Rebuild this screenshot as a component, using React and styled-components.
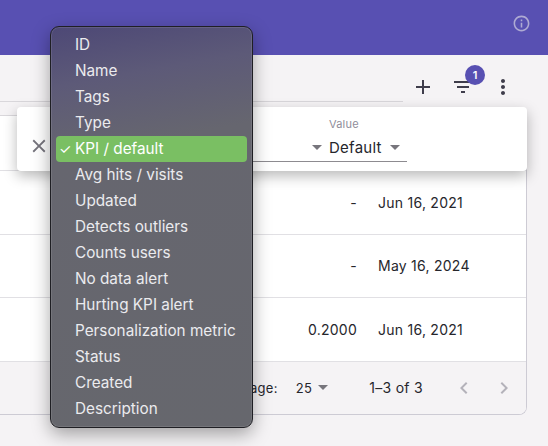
import styled, { createGlobalStyle } from 'styled-components';
import { MdAdd, MdChevronLeft, MdChevronRight, MdClose, MdFilterList, MdInfoOutline, MdMoreVert } from 'react-icons/md';

const columns = [
  'ID',
  'Name',
  'Tags',
  'Type',
  'KPI / default',
  'Avg hits / visits',
  'Updated',
  'Detects outliers',
  'Counts users',
  'No data alert',
  'Hurting KPI alert',
  'Personalization metric',
  'Status',
  'Created',
  'Description',
];

const rows = [
  { value: '-', date: 'Jun 16, 2021' },
  { value: '-', date: 'May 16, 2024' },
  { value: '0.2000', date: 'Jun 16, 2021' },
];

export default function App() {
  return (
    <Page>
      <GlobalStyle />
      <Header>
        <InfoIcon />
      </Header>

      <Main>
        <Toolbar>
          <SearchField />
          <ToolbarActions>
            <IconButton><MdAdd size={24} /></IconButton>
            <IconButton>
              <MdFilterList size={24} />
              <Badge>1</Badge>
            </IconButton>
            <IconButton><MdMoreVert size={24} /></IconButton>
          </ToolbarActions>
        </Toolbar>

        <TableCard>
          <TableHead />
          {rows.map((row, i) => (
            <TableRow key={`row${i}`}>
              <ValueCell>{row.value}</ValueCell>
              <DateCell>{row.date}</DateCell>
            </TableRow>
          ))}
          <TableFooter>
            <FooterLabel>Rows per page:</FooterLabel>
            <PageSize>25<Caret /></PageSize>
            <PageCount>1–3 of 3</PageCount>
            <PageButtons>
              <MdChevronLeft size={24} />
              <MdChevronRight size={24} />
            </PageButtons>
          </TableFooter>
        </TableCard>

        <FilterPanel>
          <CloseButton><MdClose size={22} /></CloseButton>
          <FilterFields>
            <OperatorField>
              <FieldLabel>Operator</FieldLabel>
              <FieldValue><Caret /></FieldValue>
            </OperatorField>
            <ValueField>
              <FieldLabel>Value</FieldLabel>
              <FieldValue>Default<Caret /></FieldValue>
            </ValueField>
          </FilterFields>
        </FilterPanel>
      </Main>

      <ColumnMenu>
        {columns.map((c) => (
          <MenuItem key={c} $selected={c === 'KPI / default'}>
            {c === 'KPI / default' && <Check>✓</Check>}
            {c}
          </MenuItem>
        ))}
      </ColumnMenu>
    </Page>
  );
}

const GlobalStyle = createGlobalStyle`
  html, body {
    margin: 0;
    padding: 0;
    background: #f5f3f5;
  }
`;

const Page = styled.div`
  position: relative;
  width: 548px;
  height: 446px;
  overflow: hidden;
  background: #f5f3f5;
  font-family: "Inter", "Liberation Sans", sans-serif;
  color: #26262c;
`;

const Header = styled.header`
  display: flex;
  justify-content: flex-end;
  align-items: center;
  height: 55px;
  padding: 0 17px 8px 0;
  box-sizing: border-box;
  background: #5850b2;
`;

const InfoIcon = styled(MdInfoOutline)`
  width: 19px;
  height: 19px;
  color: #aeaad3;
`;

const Main = styled.main`
  position: relative;
  padding-right: 21px;
`;

const Toolbar = styled.div`
  display: flex;
  height: 60px;
  box-sizing: border-box;
`;

const SearchField = styled.div`
  width: 403px;
  height: 46px;
  border-bottom: 1px solid #d9d7db;
`;

const ToolbarActions = styled.div`
  display: flex;
  align-items: center;
  gap: 16px;
  margin-left: 8px;
  height: 64px;
`;

const IconButton = styled.div`
  position: relative;
  display: flex;
  width: 24px;
  height: 24px;
  color: #3f3d4b;
`;

const Badge = styled.span`
  position: absolute;
  top: -10px;
  left: 14px;
  width: 20px;
  height: 20px;
  border-radius: 50%;
  background: #5850b2;
  color: #fff;
  font-size: 11px;
  font-weight: 600;
  line-height: 20px;
  text-align: center;
`;

const TableCard = styled.section`
  border-right: 1px solid #cdcbd4;
  border-bottom: 1px solid #cdcbd4;
  border-bottom-right-radius: 8px;
  overflow: hidden;
  background: #fff;
`;

const TableHead = styled.div`
  height: 55px;
  border-top: 1px solid #d9d7db;
  box-sizing: border-box;
`;

const TableRow = styled.div`
  display: grid;
  grid-template-columns: 1fr 148px;
  align-items: center;
  height: 63.6px;
  border-top: 1px solid #e1e0e4;
  box-sizing: border-box;
  font-size: 14px;
  letter-spacing: 0.25px;
`;

const ValueCell = styled.div`
  padding-right: 21px;
  text-align: right;
`;

const DateCell = styled.div``;

const TableFooter = styled.div`
  display: flex;
  justify-content: flex-end;
  align-items: center;
  height: 53px;
  padding-right: 10px;
  border-top: 1px solid #e1e0e4;
  box-sizing: border-box;
  background: #f5f3f5;
  font-size: 14px;
  letter-spacing: 0.3px;
`;

const FooterLabel = styled.span`
  margin-right: 18px;
  font-size: 13px;
`;

const PageSize = styled.span`
  display: flex;
  align-items: center;
  gap: 6px;
  font-size: 13px;
  margin-right: 41px;
`;

const PageCount = styled.span`
  margin-right: 29px;
`;

const PageButtons = styled.span`
  display: flex;
  gap: 16px;
  color: #b4b2ba;
`;

const FilterPanel = styled.div`
  position: absolute;
  top: 52px;
  left: 17px;
  display: flex;
  align-items: center;
  width: 510px;
  height: 64px;
  padding-left: 11px;
  box-sizing: border-box;
  border-radius: 4px;
  background: #fff;
  box-shadow: 0 5px 14px rgba(0, 0, 0, 0.28);
`;

const CloseButton = styled.div`
  display: flex;
  margin-top: 14px;
  color: #75737c;
`;

const FilterFields = styled.div`
  display: flex;
  gap: 7px;
  align-self: flex-end;
  margin: 0 120px 9px auto;
  border-bottom: 1px solid #8d8b90;
`;

const OperatorField = styled.div`
  display: flex;
  flex-direction: column;
  width: 118px;

  & > div {
    justify-content: flex-end;
  }
`;

const ValueField = styled.div`
  display: flex;
  flex-direction: column;
  width: 78px;

  & > div {
    justify-content: space-between;
    padding-right: 7px;
  }
`;

const FieldLabel = styled.label`
  font-size: 11px;
  line-height: 14px;
  letter-spacing: 0.2px;
  color: #8f8d9a;
`;

const FieldValue = styled.div`
  display: flex;
  align-items: center;
  height: 30px;
  padding-top: 2px;
  box-sizing: border-box;
  font-size: 15px;
  letter-spacing: 0.25px;
`;

const Caret = styled.i`
  width: 0;
  height: 0;
  border-left: 5px solid transparent;
  border-right: 5px solid transparent;
  border-top: 5px solid #77757c;
`;

const ColumnMenu = styled.ul`
  position: absolute;
  top: 26px;
  left: 50px;
  width: 203px;
  height: 402px;
  margin: 0;
  padding: 5px;
  box-sizing: border-box;
  list-style: none;
  border: 1px solid #1f1f24;
  border-radius: 9px;
  background: linear-gradient(170deg, #4d4876 0%, #5d5a78 14%, #66666f 30%, #66676d 100%);
  box-shadow: inset 0 0 0 1px rgba(255, 255, 255, 0.1), 0 6px 18px rgba(0, 0, 0, 0.35);
  font-size: 15.3px;
`;

const MenuItem = styled.li`
  position: relative;
  height: 26px;
  padding-left: 19px;
  line-height: 25px;
  border-radius: 4px;
  white-space: nowrap;
  color: ${(p) => (p.$selected ? '#fff' : '#ebebee')};
  background: ${(p) => (p.$selected ? '#7abf63' : 'transparent')};
`;

const Check = styled.span`
  position: absolute;
  left: 3px;
  font-size: 14px;
`;
